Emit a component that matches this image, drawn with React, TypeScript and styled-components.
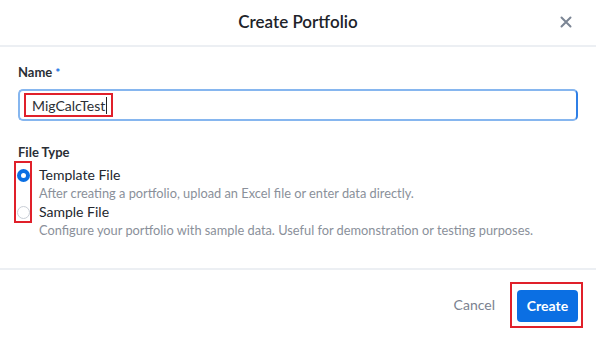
import React, { useState } from "react";
import styled, { createGlobalStyle } from "styled-components";

const GlobalStyle = createGlobalStyle`
  html, body {
    margin: 0;
    padding: 0;
    background: #ffffff;
  }
  body {
    font-family: Lato, "Noto Sans", "Liberation Sans", sans-serif;
    color: #222;
  }
  * {
    box-sizing: border-box;
  }
`;

const options = [
  {
    id: "template",
    title: "Template File",
    desc: "After creating a portfolio, upload an Excel file or enter data directly.",
  },
  {
    id: "sample",
    title: "Sample File",
    desc: "Configure your portfolio with sample data. Useful for demonstration or testing purposes.",
  },
];

const App = () => {
  const [fileType, setFileType] = useState("template");

  return (
    <>
      <GlobalStyle />
      <Dialog>
        <Header>
          <span />
          <Title>Create Portfolio</Title>
          <CloseButton aria-label="Close">
            <svg width="12" height="12" viewBox="0 0 12 12" fill="none">
              <path
                d="M1.5 1.5L10.5 10.5M10.5 1.5L1.5 10.5"
                stroke="#7b8594"
                strokeWidth="2"
                strokeLinecap="round"
              />
            </svg>
          </CloseButton>
        </Header>

        <Body>
          <Label>
            Name<Required>*</Required>
          </Label>
          <InputBox>
            <Marked>
              MigCalcTest
              <Caret />
            </Marked>
          </InputBox>

          <Label $top={22}>File Type</Label>
          <RadioGrid>
            {options.map((opt, i) => (
              <React.Fragment key={opt.id}>
                <RadioCell $row={i * 2 + 1} onClick={() => setFileType(opt.id)}>
                  <Radio $checked={fileType === opt.id} />
                </RadioCell>
                <OptionTitle $row={i * 2 + 1} onClick={() => setFileType(opt.id)}>
                  {opt.title}
                </OptionTitle>
                <OptionDesc $row={i * 2 + 2}>{opt.desc}</OptionDesc>
              </React.Fragment>
            ))}
            <MarkBox />
          </RadioGrid>
        </Body>

        <Footer>
          <CancelButton>Cancel</CancelButton>
          <MarkFrame>
            <PrimaryButton>Create</PrimaryButton>
          </MarkFrame>
        </Footer>
      </Dialog>
    </>
  );
};

export default App;

const Dialog = styled.div`
  width: 596px;
  height: 339px;
  display: flex;
  flex-direction: column;
  background: #fff;
`;

const Header = styled.div`
  height: 47px;
  display: grid;
  grid-template-columns: 1fr auto 1fr;
  align-items: center;
  padding: 0 24px 2px 24px;
  border-bottom: 2px solid #eceff3;
`;

const Title = styled.div`
  font-size: 17px;
  font-weight: 600;
  color: #202329;
`;

const CloseButton = styled.button`
  all: unset;
  justify-self: end;
  width: 12px;
  height: 12px;
  display: flex;
  cursor: pointer;
`;

const Body = styled.div`
  flex: 1;
  padding: 16px 18px 0 18px;
  display: flex;
  flex-direction: column;
`;

const Label = styled.div<{ $top?: number }>`
  font-size: 13px;
  font-weight: 700;
  line-height: 18px;
  color: #2b2f36;
  margin-top: ${(p) => p.$top ?? 0}px;
`;

const Required = styled.span`
  color: #0b6fe3;
  font-size: 12px;
  font-weight: 700;
  margin-left: 3px;
`;

const InputBox = styled.div`
  margin-top: 7px;
  width: 560px;
  height: 32px;
  border: 2px solid #86b6ef;
  border-right-color: #2f7fe6;
  border-radius: 5px;
  display: flex;
  align-items: center;
  padding-left: 4px;
`;

const Marked = styled.span`
  display: inline-flex;
  align-items: center;
  height: 24px;
  padding: 0 4px 0 6px;
  border: 2px solid #e0202a;
  font-size: 14px;
  color: #2b2f36;
`;

const Caret = styled.span`
  width: 1px;
  height: 17px;
  background: #222;
  margin-left: 1px;
`;

const RadioGrid = styled.div`
  margin-top: 5px;
  margin-left: -1px;
  display: grid;
  grid-template-columns: 14px 1fr;
  grid-template-rows: 18px 19px 18px 19px;
  column-gap: 8px;
`;

const MarkBox = styled.div`
  grid-column: 1;
  grid-row: 1 / 4;
  margin: -5px -1px -2px -3px;
  border: 2px solid #e0202a;
  pointer-events: none;
`;

const RadioCell = styled.div<{ $row: number }>`
  grid-column: 1;
  grid-row: ${(p) => p.$row};
  display: flex;
  align-items: center;
  cursor: pointer;
`;

const Radio = styled.span<{ $checked: boolean }>`
  width: 13px;
  height: 13px;
  border-radius: 50%;
  background: #fff;
  border: ${(p) => (p.$checked ? "4px solid #0b6fe3" : "1px solid #c9ced6")};
`;

const OptionTitle = styled.div<{ $row: number }>`
  grid-column: 2;
  grid-row: ${(p) => p.$row};
  font-size: 14px;
  line-height: 18px;
  color: #23272e;
  cursor: pointer;
`;

const OptionDesc = styled.div<{ $row: number }>`
  grid-column: 2;
  grid-row: ${(p) => p.$row};
  font-size: 12.8px;
  line-height: 19px;
  color: #8a909a;
`;

const Footer = styled.div`
  height: 71px;
  border-top: 2px solid #eceff3;
  display: flex;
  align-items: center;
  justify-content: flex-end;
  gap: 15px;
  padding-right: 13px;
`;

const CancelButton = styled.button`
  all: unset;
  font-size: 14px;
  color: #7b8290;
  cursor: pointer;
`;

const MarkFrame = styled.span`
  display: inline-flex;
  padding: 6px 3px 4px 5px;
  border: 2px solid #e0202a;
`;

const PrimaryButton = styled.button`
  all: unset;
  width: 61px;
  height: 32px;
  border-radius: 4px;
  background: #0b6fe3;
  color: #fff;
  font-size: 14px;
  font-weight: 700;
  display: flex;
  align-items: center;
  justify-content: center;
  cursor: pointer;
`;
